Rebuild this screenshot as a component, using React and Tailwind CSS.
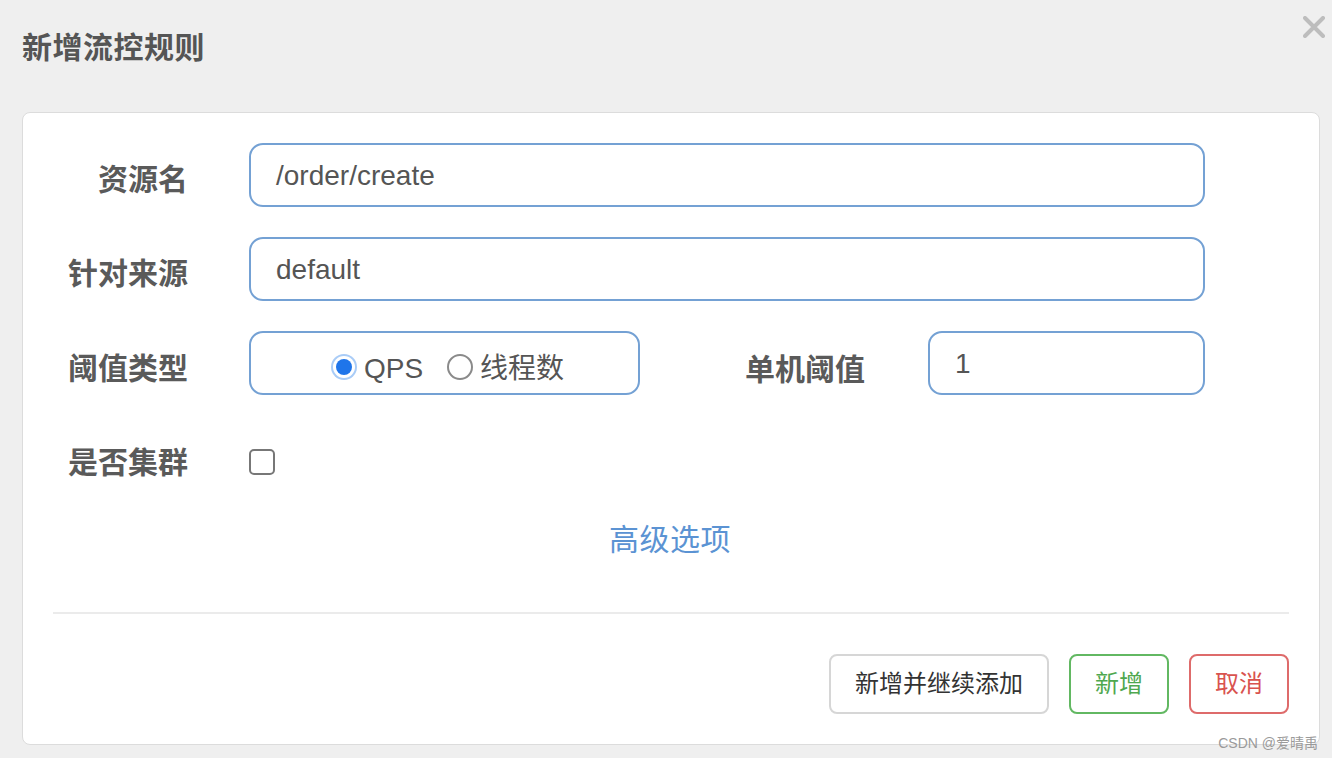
import React from 'react';

const font = { fontFamily: '"Liberation Sans", "Noto Sans CJK SC", sans-serif' };

const Label = ({ children, className = '' }) => (
    <div className={`text-[30px] font-bold text-[#5a5a5a] text-right leading-none ${className}`}>{children}</div>
);

const Input = ({ value, className = '' }) => (
    <div className={`h-[64px] border-2 border-[#74a1d4] rounded-[14px] flex items-center px-[25px] pt-[2px] text-[28px] text-[#555] bg-white ${className}`}>
        {value}
    </div>
);

const Radio = ({ checked, label }) => (
    <div className="flex items-center gap-[7px]">
        {checked ? (
            <span className="w-[26px] h-[26px] rounded-full bg-[#a9ccf7] flex items-center justify-center">
                <span className="w-[22px] h-[22px] rounded-full bg-white flex items-center justify-center">
                    <span className="w-[16px] h-[16px] rounded-full bg-[#1f75ea]"></span>
                </span>
            </span>
        ) : (
            <span className="w-[26px] h-[26px] rounded-full border-2 border-[#8a8a8a] bg-white"></span>
        )}
        <span className="text-[28px] text-[#555] leading-none pt-[3px]">{label}</span>
    </div>
);

export default function App() {
    return (
        <div className="w-[1332px] h-[758px] bg-[#efefef] relative overflow-hidden" style={font}>
            {/* header */}
            <div className="h-[112px] pl-[22px] pt-[32px]">
                <h1 className="text-[30px] font-bold text-[#555] leading-[32px] tracking-[0.5px]">新增流控规则</h1>
            </div>
            <button className="absolute top-[16px] right-[7px] w-[22px] h-[22px]">
                <svg viewBox="0 0 22 22" width="22" height="22">
                    <path d="M2 2 L20 20 M20 2 L2 20" stroke="#bdbdbd" strokeWidth="4" strokeLinecap="round" />
                </svg>
            </button>

            {/* card */}
            <div className="ml-[22px] w-[1298px] h-[633px] bg-white border border-[#dcdcdc] rounded-[8px] pt-[30px]">
                <div className="flex flex-col gap-[30px]">
                    <div className="flex items-center">
                        <Label className="w-[165px] pt-[10px]">资源名</Label>
                        <Input value="/order/create" className="ml-[61px] w-[956px]" />
                    </div>
                    <div className="flex items-center">
                        <Label className="w-[165px] pt-[10px]">针对来源</Label>
                        <Input value="default" className="ml-[61px] w-[956px]" />
                    </div>
                    <div className="flex items-center">
                        <Label className="w-[165px] pt-[12px]">阈值类型</Label>
                        <div className="ml-[61px] w-[391px] h-[64px] border-2 border-[#74a1d4] rounded-[14px] flex items-center justify-center gap-[24px] pl-[6px] pt-[8px]">
                            <Radio checked label="QPS" />
                            <Radio label="线程数" />
                        </div>
                        <Label className="w-[225px] pt-[14px]">单机阈值</Label>
                        <Input value="1" className="ml-[63px] w-[277px]" />
                    </div>
                </div>
                <div className="flex items-center h-[64px] mt-[35px]">
                    <Label className="w-[165px] pt-[2px]">是否集群</Label>
                    <span className="ml-[61px] w-[26px] h-[26px] border-2 border-[#777] rounded-[5px] bg-white"></span>
                </div>
                <div className="mt-[26px] h-[40px] flex items-center justify-center">
                    <a className="text-[30px] text-[#5b93d3] leading-none pr-[2px] tracking-[0.5px]">高级选项</a>
                </div>
                <div className="mx-[30px] mt-[52px] border-t-2 border-[#ebebeb]"></div>
                <div className="flex justify-end gap-[20px] mr-[30px] mt-[40px]">
                    <button className="w-[220px] h-[60px] border-2 border-[#d6d6d6] rounded-[8px] text-[24px] text-[#333] bg-white">新增并继续添加</button>
                    <button className="w-[100px] h-[60px] border-2 border-[#62b862] rounded-[8px] text-[24px] text-[#4fa84f] bg-white">新增</button>
                    <button className="w-[100px] h-[60px] border-2 border-[#de6b6b] rounded-[8px] text-[24px] text-[#d9534f] bg-white">取消</button>
                </div>
            </div>

            <div className="absolute right-[14px] bottom-[8px] text-[14px] text-[#9a9a9a] leading-none">CSDN @爱晴禹</div>
        </div>
    );
}
